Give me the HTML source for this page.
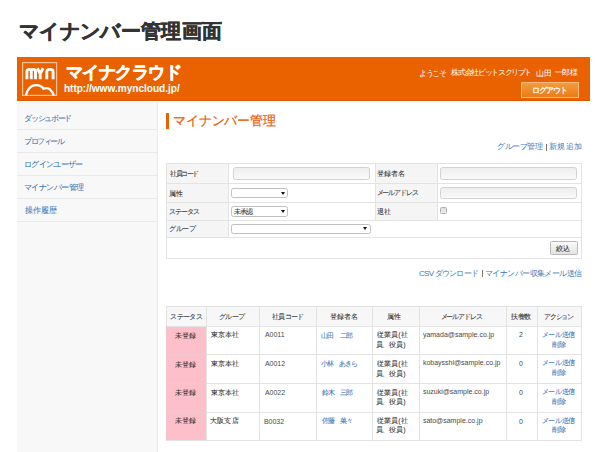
<!DOCTYPE html>
<html lang="ja"><head><meta charset="utf-8">
<style>
*{margin:0;padding:0;box-sizing:border-box}
html,body{width:606px;height:452px;overflow:hidden;background:#fff}
body{font-family:"Liberation Sans",sans-serif;color:#333;position:relative}
.a{position:absolute;white-space:nowrap}
.t{position:absolute;white-space:nowrap;line-height:1.25}
#hdr{left:17px;top:57px;width:573px;height:44px;background:#ea6200;border-bottom:1px solid #e35300}
#logoutbtn{left:521px;top:82px;width:58px;height:16px;border:1px solid #f6bb86;background:linear-gradient(#f29c3c,#ea7c16)}
#side{left:17px;top:102px;width:141px;height:350px;background:#f8f8f8;border-right:1px solid #ececec}
#hbar{left:166px;top:113px;width:3px;height:15.5px;background:#ea6200}
.hl{position:absolute;height:1px;background:#e3e3e3}
.vl{position:absolute;width:1px;background:#e3e3e3}
.lab{position:absolute;background:#f5f5f5}
.inp{position:absolute;border:1px solid #d2d2d2;border-radius:2.5px;background:linear-gradient(#eeeeee,#fafafa)}
.sel{position:absolute;border:1px solid #c0c0c0;border-radius:2.5px;background:#fff}
.arr{position:absolute;width:0;height:0;border-left:2px solid transparent;border-right:2px solid transparent;border-top:3.5px solid #111}
.pink{position:absolute;background:#fdc0cb}
</style></head><body>
<div id="hdr" class="a"></div>
<svg class="a" style="left:0;top:0" width="606" height="110" viewBox="0 0 606 110">
  <rect x="22.6" y="62.6" width="34" height="32.8" fill="none" stroke="#f7c29a" stroke-width="1.2"/>
  <g fill="none" stroke="#fff" stroke-width="2.9" stroke-linecap="butt">
    <path d="M26.9,79.2 V71.6 Q26.9,69.4 29.3,69.4 Q31.3,69.4 31.3,71.6 V79.2 M31.3,71.6 Q31.3,69.4 33.3,69.4 Q35.5,69.4 35.5,71.6 V79.2"/>
    <path d="M37.3,68.3 L40.2,73.5 L43.1,68.3 M40.2,73.2 V79.2"/>
    <path d="M46.8,79.2 V72 Q46.8,69.4 50,69.4 Q53.1,69.4 53.1,72 V79.2"/>
  </g>
  <path d="M25.9,95.3 C27.2,90.3 30.2,85.4 35.6,85.1 C39.6,84.9 42.1,86.6 43.4,88.7 C46.6,87.4 50.1,88.4 51.1,90.9 C52.4,92.1 53.3,93.6 53.8,95.3" fill="none" stroke="#fff" stroke-width="2.4"/>
</svg>
<div id="logoutbtn" class="a"></div>
<div id="side" class="a"></div>
<div class="hl" style="left:17px;top:129px;width:140px;background:#e9e9e9"></div>
<div class="hl" style="left:17px;top:152px;width:140px;background:#e9e9e9"></div>
<div class="hl" style="left:17px;top:175px;width:140px;background:#e9e9e9"></div>
<div class="hl" style="left:17px;top:198px;width:140px;background:#e9e9e9"></div>
<div class="hl" style="left:17px;top:221px;width:140px;background:#e9e9e9"></div>
<div id="hbar" class="a"></div>
<div class="a" style="left:546px;top:143.5px;width:1px;height:7px;background:#85755a"></div>
<div class="a" style="left:482px;top:270px;width:1px;height:7px;background:#85755a"></div>

<div class="lab" style="left:166px;top:163px;width:63px;height:74px"></div>
<div class="lab" style="left:374.5px;top:163px;width:62px;height:57px"></div>
<div class="hl" style="left:166px;top:163px;width:416px"></div>
<div class="hl" style="left:166px;top:183px;width:416px"></div>
<div class="hl" style="left:166px;top:202px;width:416px"></div>
<div class="hl" style="left:166px;top:220px;width:416px"></div>
<div class="hl" style="left:166px;top:237px;width:416px"></div>
<div class="hl" style="left:166px;top:258px;width:416px"></div>
<div class="vl" style="left:166px;top:163px;height:96px"></div>
<div class="vl" style="left:581px;top:163px;height:96px"></div>
<div class="vl" style="left:228px;top:163px;height:74px"></div>
<div class="vl" style="left:374.5px;top:163px;height:57px"></div>
<div class="vl" style="left:436.5px;top:163px;height:57px"></div>

<div class="inp" style="left:232.5px;top:167.3px;width:137px;height:12.3px"></div>
<div class="inp" style="left:440px;top:167.3px;width:136.5px;height:12.3px"></div>
<div class="inp" style="left:440px;top:186.5px;width:136.5px;height:12.9px"></div>
<div class="sel" style="left:231.3px;top:188.2px;width:56.5px;height:9.8px"></div>
<div class="arr" style="left:280.5px;top:191.5px"></div>
<div class="sel" style="left:231.3px;top:206.3px;width:56.5px;height:10.3px"></div>
<div class="arr" style="left:280.5px;top:210px"></div>
<div class="sel" style="left:231.3px;top:223.8px;width:139.5px;height:10.2px"></div>
<div class="arr" style="left:362.5px;top:227.3px"></div>
<div class="a" style="left:440px;top:207px;width:7px;height:7px;border:1px solid #b0b0b0;border-radius:1.5px;background:linear-gradient(#dcdcdc,#f0f0f0)"></div>
<div class="a" style="left:549.5px;top:241.3px;width:28px;height:13.5px;border:1px solid #b8b8b8;border-radius:1.5px;background:linear-gradient(#fafafa,#e2e2e2)"></div>

<div class="lab" style="left:166px;top:306px;width:416px;height:20px;background:#f7f7f7"></div>
<div class="pink" style="left:166px;top:326px;width:40px;height:114px"></div>
<div class="hl" style="left:166px;top:306px;width:416px"></div>
<div class="hl" style="left:166px;top:325.5px;width:416px"></div>
<div class="hl" style="left:166px;top:354px;width:416px"></div>
<div class="hl" style="left:166px;top:383px;width:416px"></div>
<div class="hl" style="left:166px;top:411.5px;width:416px"></div>
<div class="hl" style="left:166px;top:440px;width:416px"></div>
<div class="vl" style="left:166px;top:306px;height:135px"></div>
<div class="vl" style="left:206px;top:306px;height:135px"></div>
<div class="vl" style="left:259.4px;top:306px;height:135px"></div>
<div class="vl" style="left:316px;top:306px;height:135px"></div>
<div class="vl" style="left:371.5px;top:306px;height:135px"></div>
<div class="vl" style="left:418.5px;top:306px;height:135px"></div>
<div class="vl" style="left:505.5px;top:306px;height:135px"></div>
<div class="vl" style="left:536.5px;top:306px;height:135px"></div>
<div class="vl" style="left:581px;top:306px;height:135px"></div>
<div class="a" style="left:166px;top:354px;width:40px;height:1px;background:#f0c8d0"></div>
<div class="a" style="left:166px;top:383px;width:40px;height:1px;background:#f0c8d0"></div>
<div class="a" style="left:166px;top:411.5px;width:40px;height:1px;background:#f0c8d0"></div>
<div class="a" style="left:166px;top:326px;width:1px;height:114px;background:#f4c4cc"></div>
<div class="t" id="title" style="left:19.00px;top:18.90px;font-size:20px;letter-spacing:0.339px;font-weight:bold;color:#333;-webkit-text-stroke:0.5px #333">マイナンバー管理画面</div>
<div class="t" id="brand" style="left:65.60px;top:61.80px;font-size:17px;letter-spacing:-0.500px;font-weight:bold;color:#fff;-webkit-text-stroke:0.6px #fff">マイナクラウド</div>
<div class="t" id="url" style="left:63.90px;top:83.20px;font-size:10.1px;letter-spacing:-0.018px;font-weight:bold;color:#fff">http://www.myncloud.jp/</div>
<div class="t" id="w0" style="left:419.40px;top:68.80px;font-size:8px;letter-spacing:-1.600px;color:#fff">ようこそ</div>
<div class="t" id="w1" style="left:451.40px;top:68.40px;font-size:8px;letter-spacing:-1.355px;color:#fff">株式会社ビットスクリプト</div>
<div class="t" id="w2" style="left:535.60px;top:68.80px;font-size:8px;letter-spacing:0.800px;color:#fff">山田</div>
<div class="t" id="w3" style="left:554.50px;top:68.20px;font-size:8px;letter-spacing:-0.300px;color:#fff">一郎様</div>
<div class="t" id="logout" style="left:531.80px;top:84.60px;font-size:8.3px;letter-spacing:-1.000px;color:#fff;-webkit-text-stroke:0.25px #fff">ログアウト</div>
<div class="t" id="s0" style="left:24.40px;top:113.90px;font-size:8px;letter-spacing:-1.367px;color:#3774b6;-webkit-text-stroke:0.05px currentColor">ダッシュボード</div>
<div class="t" id="s1" style="left:24.40px;top:136.70px;font-size:8px;letter-spacing:-1.540px;color:#3774b6;-webkit-text-stroke:0.05px currentColor">プロフィール</div>
<div class="t" id="s2" style="left:24.00px;top:160.20px;font-size:8px;letter-spacing:-0.657px;color:#3774b6;-webkit-text-stroke:0.05px currentColor">ログインユーザー</div>
<div class="t" id="s3" style="left:24.00px;top:183.20px;font-size:8px;letter-spacing:-0.514px;color:#3774b6;-webkit-text-stroke:0.05px currentColor">マイナンバー管理</div>
<div class="t" id="s4" style="left:25.00px;top:206.10px;font-size:8px;letter-spacing:-0.067px;color:#3774b6;-webkit-text-stroke:0.05px currentColor">操作履歴</div>
<div class="t" id="htext" style="left:173.20px;top:112.70px;font-size:13px;letter-spacing:-0.214px;color:#e8600a;-webkit-text-stroke:0.22px #e8600a">マイナンバー管理</div>
<div class="t" id="lnk1a" style="left:497.00px;top:142.10px;font-size:8px;letter-spacing:-0.450px;color:#3b78b8">グループ管理</div>
<div class="t" id="lnk1b" style="left:549.00px;top:142.10px;font-size:8px;letter-spacing:0.433px;color:#3b78b8">新規追加</div>
<div class="t" id="lnk2a" style="left:419.00px;top:268.90px;font-size:8px;letter-spacing:-0.740px;color:#3b78b8">CSV ダウンロード</div>
<div class="t" id="lnk2b" style="left:485.00px;top:268.90px;font-size:8px;letter-spacing:-0.583px;color:#3b78b8">マイナンバー収集メール送信</div>
<div class="t" id="f0" style="left:170.10px;top:170.30px;font-size:7px;letter-spacing:-1.450px;color:#333;-webkit-text-stroke:0.07px currentColor">社員コード</div>
<div class="t" id="f1" style="left:169.10px;top:189.60px;font-size:7px;letter-spacing:-0.100px;color:#333;-webkit-text-stroke:0.07px currentColor">属性</div>
<div class="t" id="f2" style="left:169.10px;top:207.60px;font-size:7px;letter-spacing:-1.000px;color:#333;-webkit-text-stroke:0.07px currentColor">ステータス</div>
<div class="t" id="f3" style="left:169.10px;top:225.10px;font-size:7px;letter-spacing:-0.433px;color:#333;-webkit-text-stroke:0.07px currentColor">グループ</div>
<div class="t" id="f4" style="left:376.50px;top:169.60px;font-size:7px;letter-spacing:0.167px;color:#333;-webkit-text-stroke:0.07px currentColor">登録者名</div>
<div class="t" id="f5" style="left:376.50px;top:189.40px;font-size:7px;letter-spacing:-1.067px;color:#333;-webkit-text-stroke:0.07px currentColor">メールアドレス</div>
<div class="t" id="f6" style="left:376.50px;top:207.60px;font-size:7px;letter-spacing:0.600px;color:#333;-webkit-text-stroke:0.07px currentColor">退社</div>
<div class="t" id="mishonin" style="left:233.50px;top:207.60px;font-size:7px;letter-spacing:-0.700px;color:#333;-webkit-text-stroke:0.07px currentColor">未承認</div>
<div class="t" id="shibori" style="left:556.00px;top:245.00px;font-size:7px;letter-spacing:0.000px;color:#333;-webkit-text-stroke:0.07px currentColor">絞込</div>
<div class="t" id="h0" style="left:170.40px;top:312.70px;font-size:7px;letter-spacing:-0.650px;color:#333;-webkit-text-stroke:0.07px currentColor">ステータス</div>
<div class="t" id="h1" style="left:218.80px;top:312.70px;font-size:7px;letter-spacing:-0.433px;color:#333;-webkit-text-stroke:0.07px currentColor">グループ</div>
<div class="t" id="h2" style="left:272.40px;top:312.70px;font-size:7px;letter-spacing:-0.900px;color:#333;-webkit-text-stroke:0.07px currentColor">社員コード</div>
<div class="t" id="h3" style="left:329.70px;top:312.70px;font-size:7px;letter-spacing:0.167px;color:#333;-webkit-text-stroke:0.07px currentColor">登録者名</div>
<div class="t" id="h4" style="left:387.40px;top:312.70px;font-size:7px;letter-spacing:-0.200px;color:#333;-webkit-text-stroke:0.07px currentColor">属性</div>
<div class="t" id="h5" style="left:440.60px;top:312.70px;font-size:7px;letter-spacing:-1.133px;color:#333;-webkit-text-stroke:0.07px currentColor">メールアドレス</div>
<div class="t" id="h6" style="left:511.30px;top:312.70px;font-size:7px;letter-spacing:-0.700px;color:#333;-webkit-text-stroke:0.07px currentColor">扶養数</div>
<div class="t" id="h7" style="left:544.20px;top:312.70px;font-size:7px;letter-spacing:-1.300px;color:#333;-webkit-text-stroke:0.07px currentColor">アクション</div>
<div class="t" id="r0st" style="left:175.40px;top:332.00px;font-size:7px;letter-spacing:0.000px;color:#333;-webkit-text-stroke:0.07px currentColor">未登録</div>
<div class="t" id="r0g" style="left:210.80px;top:331.40px;font-size:7px;letter-spacing:-0.033px;color:#333;-webkit-text-stroke:0.07px currentColor">東京本社</div>
<div class="t" id="r0c" style="left:264.90px;top:331.20px;font-size:7px;letter-spacing:0.000px;color:#484848">A0011</div>
<div class="t" id="r0n" style="left:320.80px;top:332.00px;font-size:7px;letter-spacing:-0.750px;color:#3b78b8;-webkit-text-stroke:0.07px currentColor">山田　二郎</div>
<div class="t" id="r0a1" style="left:376.50px;top:331.00px;font-size:7px;letter-spacing:0.250px;color:#333;-webkit-text-stroke:0.07px currentColor">従業員(社</div>
<div class="t" id="r0a2" style="left:375.50px;top:340.90px;font-size:7px;letter-spacing:-0.050px;color:#333;-webkit-text-stroke:0.07px currentColor">員、役員)</div>
<div class="t" id="r0e" style="left:422.90px;top:331.20px;font-size:7px;letter-spacing:0.000px;color:#484848">yamada@sample.co.jp</div>
<div class="t" id="r0k" style="left:518.90px;top:331.20px;font-size:7px;letter-spacing:0.000px;color:#484848">2</div>
<div class="t" id="r0m1" style="left:541.80px;top:330.60px;font-size:7px;letter-spacing:-0.400px;color:#3b78b8;-webkit-text-stroke:0.07px currentColor">メール送信</div>
<div class="t" id="r0m2" style="left:552.20px;top:340.60px;font-size:7px;letter-spacing:0.100px;color:#3b78b8;-webkit-text-stroke:0.07px currentColor">削除</div>
<div class="t" id="r1st" style="left:175.40px;top:360.80px;font-size:7px;letter-spacing:0.000px;color:#333;-webkit-text-stroke:0.07px currentColor">未登録</div>
<div class="t" id="r1g" style="left:210.80px;top:360.20px;font-size:7px;letter-spacing:-0.033px;color:#333;-webkit-text-stroke:0.07px currentColor">東京本社</div>
<div class="t" id="r1c" style="left:264.90px;top:360.00px;font-size:7px;letter-spacing:0.000px;color:#484848">A0012</div>
<div class="t" id="r1n" style="left:321.20px;top:359.80px;font-size:7px;letter-spacing:-1.100px;color:#3b78b8;-webkit-text-stroke:0.07px currentColor">小林　あきら</div>
<div class="t" id="r1a1" style="left:376.50px;top:359.80px;font-size:7px;letter-spacing:0.250px;color:#333;-webkit-text-stroke:0.07px currentColor">従業員(社</div>
<div class="t" id="r1a2" style="left:375.50px;top:369.70px;font-size:7px;letter-spacing:-0.050px;color:#333;-webkit-text-stroke:0.07px currentColor">員、役員)</div>
<div class="t" id="r1e" style="left:422.90px;top:359.00px;font-size:7px;letter-spacing:0.000px;color:#484848">kobaysshi@sample.co.jp</div>
<div class="t" id="r1k" style="left:518.90px;top:360.00px;font-size:7px;letter-spacing:0.000px;color:#484848">0</div>
<div class="t" id="r1m1" style="left:541.80px;top:359.40px;font-size:7px;letter-spacing:-0.400px;color:#3b78b8;-webkit-text-stroke:0.07px currentColor">メール送信</div>
<div class="t" id="r1m2" style="left:552.20px;top:369.40px;font-size:7px;letter-spacing:0.100px;color:#3b78b8;-webkit-text-stroke:0.07px currentColor">削除</div>
<div class="t" id="r2st" style="left:175.40px;top:388.60px;font-size:7px;letter-spacing:0.000px;color:#333;-webkit-text-stroke:0.07px currentColor">未登録</div>
<div class="t" id="r2g" style="left:210.80px;top:389.00px;font-size:7px;letter-spacing:-0.033px;color:#333;-webkit-text-stroke:0.07px currentColor">東京本社</div>
<div class="t" id="r2c" style="left:264.90px;top:388.80px;font-size:7px;letter-spacing:0.000px;color:#484848">A0022</div>
<div class="t" id="r2n" style="left:321.60px;top:388.60px;font-size:7px;letter-spacing:-0.850px;color:#3b78b8;-webkit-text-stroke:0.07px currentColor">鈴木　三郎</div>
<div class="t" id="r2a1" style="left:376.50px;top:388.60px;font-size:7px;letter-spacing:0.250px;color:#333;-webkit-text-stroke:0.07px currentColor">従業員(社</div>
<div class="t" id="r2a2" style="left:375.50px;top:397.50px;font-size:7px;letter-spacing:-0.050px;color:#333;-webkit-text-stroke:0.07px currentColor">員、役員)</div>
<div class="t" id="r2e" style="left:422.90px;top:387.80px;font-size:7px;letter-spacing:0.000px;color:#484848">suzuki@sample.co.jp</div>
<div class="t" id="r2k" style="left:518.90px;top:388.80px;font-size:7px;letter-spacing:0.000px;color:#484848">0</div>
<div class="t" id="r2m1" style="left:541.80px;top:388.20px;font-size:7px;letter-spacing:-0.400px;color:#3b78b8;-webkit-text-stroke:0.07px currentColor">メール送信</div>
<div class="t" id="r2m2" style="left:552.20px;top:398.20px;font-size:7px;letter-spacing:0.100px;color:#3b78b8;-webkit-text-stroke:0.07px currentColor">削除</div>
<div class="t" id="r3st" style="left:175.40px;top:417.40px;font-size:7px;letter-spacing:0.000px;color:#333;-webkit-text-stroke:0.07px currentColor">未登録</div>
<div class="t" id="r3g" style="left:209.80px;top:416.80px;font-size:7px;letter-spacing:0.300px;color:#333;-webkit-text-stroke:0.07px currentColor">大阪支店</div>
<div class="t" id="r3c" style="left:263.90px;top:417.60px;font-size:7px;letter-spacing:0.000px;color:#484848">B0032</div>
<div class="t" id="r3n" style="left:321.60px;top:417.40px;font-size:7px;letter-spacing:-0.850px;color:#3b78b8;-webkit-text-stroke:0.07px currentColor">佐藤　菜々</div>
<div class="t" id="r3a1" style="left:376.50px;top:417.40px;font-size:7px;letter-spacing:0.250px;color:#333;-webkit-text-stroke:0.07px currentColor">従業員(社</div>
<div class="t" id="r3a2" style="left:375.50px;top:426.30px;font-size:7px;letter-spacing:-0.050px;color:#333;-webkit-text-stroke:0.07px currentColor">員、役員)</div>
<div class="t" id="r3e" style="left:422.90px;top:416.60px;font-size:7px;letter-spacing:0.000px;color:#484848">sato@sample.co.jp</div>
<div class="t" id="r3k" style="left:518.90px;top:417.60px;font-size:7px;letter-spacing:0.000px;color:#484848">0</div>
<div class="t" id="r3m1" style="left:541.80px;top:417.00px;font-size:7px;letter-spacing:-0.400px;color:#3b78b8;-webkit-text-stroke:0.07px currentColor">メール送信</div>
<div class="t" id="r3m2" style="left:552.20px;top:426.00px;font-size:7px;letter-spacing:0.100px;color:#3b78b8;-webkit-text-stroke:0.07px currentColor">削除</div>
</body></html>
